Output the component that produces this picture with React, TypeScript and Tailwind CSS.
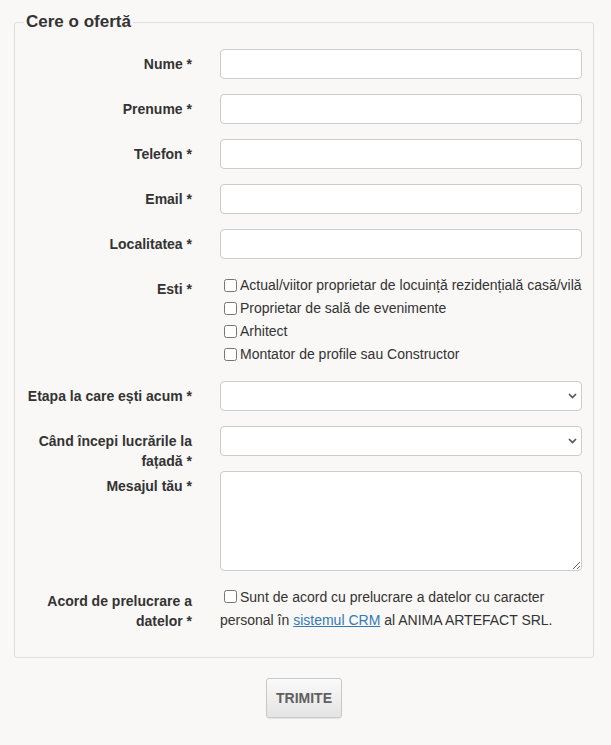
import React from 'react';

// Rând de formular: etichetă în dreapta coloanei stângi, câmpul în dreapta
function Row({ label, children }: { label: React.ReactNode; children: React.ReactNode }) {
  return (
    <div className="flex items-start mb-[15px]">
      <label className="w-[168px] h-[30px] pt-[5px] text-right font-bold text-[14px] leading-[20px] text-[#333] shrink-0">
        {label}
      </label>
      <div className="ml-[28px] w-[362px]">{children}</div>
    </div>
  );
}

const inputCls =
  'block w-full h-[30px] bg-white border border-[#ccc] rounded-[4px] px-3 text-[14px] text-[#555] outline-none';

function Select() {
  return (
    <div className="relative">
      <select className={inputCls + ' appearance-none'} defaultValue="">
        <option value=""></option>
      </select>
      <svg
        className="absolute right-[5px] top-[12px] pointer-events-none"
        width="9"
        height="6"
        viewBox="0 0 9 6"
        fill="none"
        stroke="#555"
        strokeWidth="1.7"
      >
        <path d="M1 1l3.5 3.5L8 1" />
      </svg>
    </div>
  );
}

function Check({ children }: { children: React.ReactNode }) {
  return (
    <label className="flex items-center leading-[23px] text-[14px] text-[#333]">
      <input type="checkbox" className="ml-[4px] mr-[3px] w-[13px] h-[13px]" />
      <span>{children}</span>
    </label>
  );
}

export default function App() {
  return (
    <div className="min-h-[745px] bg-[#f9f8f6] pt-[1px] font-['Liberation_Sans',Arial,sans-serif]">
      <form className="ml-[14px] w-[580px]">
        <fieldset className="mt-[11px] border border-[#ddd] rounded-[3px] pl-[9px] pr-[11px] pt-[17px] pb-[10px]">
          <legend className="px-[2px] text-[17px] leading-[20px] font-bold text-[#333]">Cere o ofertă</legend>

          <Row label="Nume *">
            <input type="text" className={inputCls} />
          </Row>
          <Row label="Prenume *">
            <input type="text" className={inputCls} />
          </Row>
          <Row label="Telefon *">
            <input type="text" className={inputCls} />
          </Row>
          <Row label="Email *">
            <input type="email" className={inputCls} />
          </Row>
          <Row label="Localitatea *">
            <input type="text" className={inputCls} />
          </Row>
          <Row label="Esti *">
            <Check>Actual/viitor proprietar de locuință rezidențială casă/vilă</Check>
            <Check>Proprietar de sală de evenimente</Check>
            <Check>Arhitect</Check>
            <Check>Montator de profile sau Constructor</Check>
          </Row>
          <Row label="Etapa la care ești acum *">
            <Select />
          </Row>
          <Row label="Când începi lucrările la fațadă *">
            <Select />
          </Row>
          <Row label="Mesajul tău *">
            <textarea className="block w-full h-[100px] bg-white border border-[#ccc] rounded-[4px] px-3 py-1 text-[14px] outline-none" />
          </Row>
          <Row label="Acord de prelucrare a datelor *">
            <div className="text-[14px] leading-[23px] text-[#333]">
              <input type="checkbox" className="ml-[4px] mr-[3px] w-[13px] h-[13px] align-[-1px]" />
              Sunt de acord cu prelucrare a datelor cu caracter personal în{' '}
              <a href="#" className="text-[#337ab7] underline">
                sistemul CRM
              </a>{' '}
              al ANIMA ARTEFACT SRL.
            </div>
          </Row>
        </fieldset>

        <div className="flex justify-center mt-[20px]">
          <button
            type="button"
            className="w-[76px] h-[40px] rounded-[3px] border border-[#c8c8c8] bg-gradient-to-b from-[#fafafa] to-[#e4e4e4] text-[14px] font-bold text-[#606060] shadow-[0_1px_1px_rgba(0,0,0,0.08)]"
          >
            TRIMITE
          </button>
        </div>
      </form>
    </div>
  );
}
